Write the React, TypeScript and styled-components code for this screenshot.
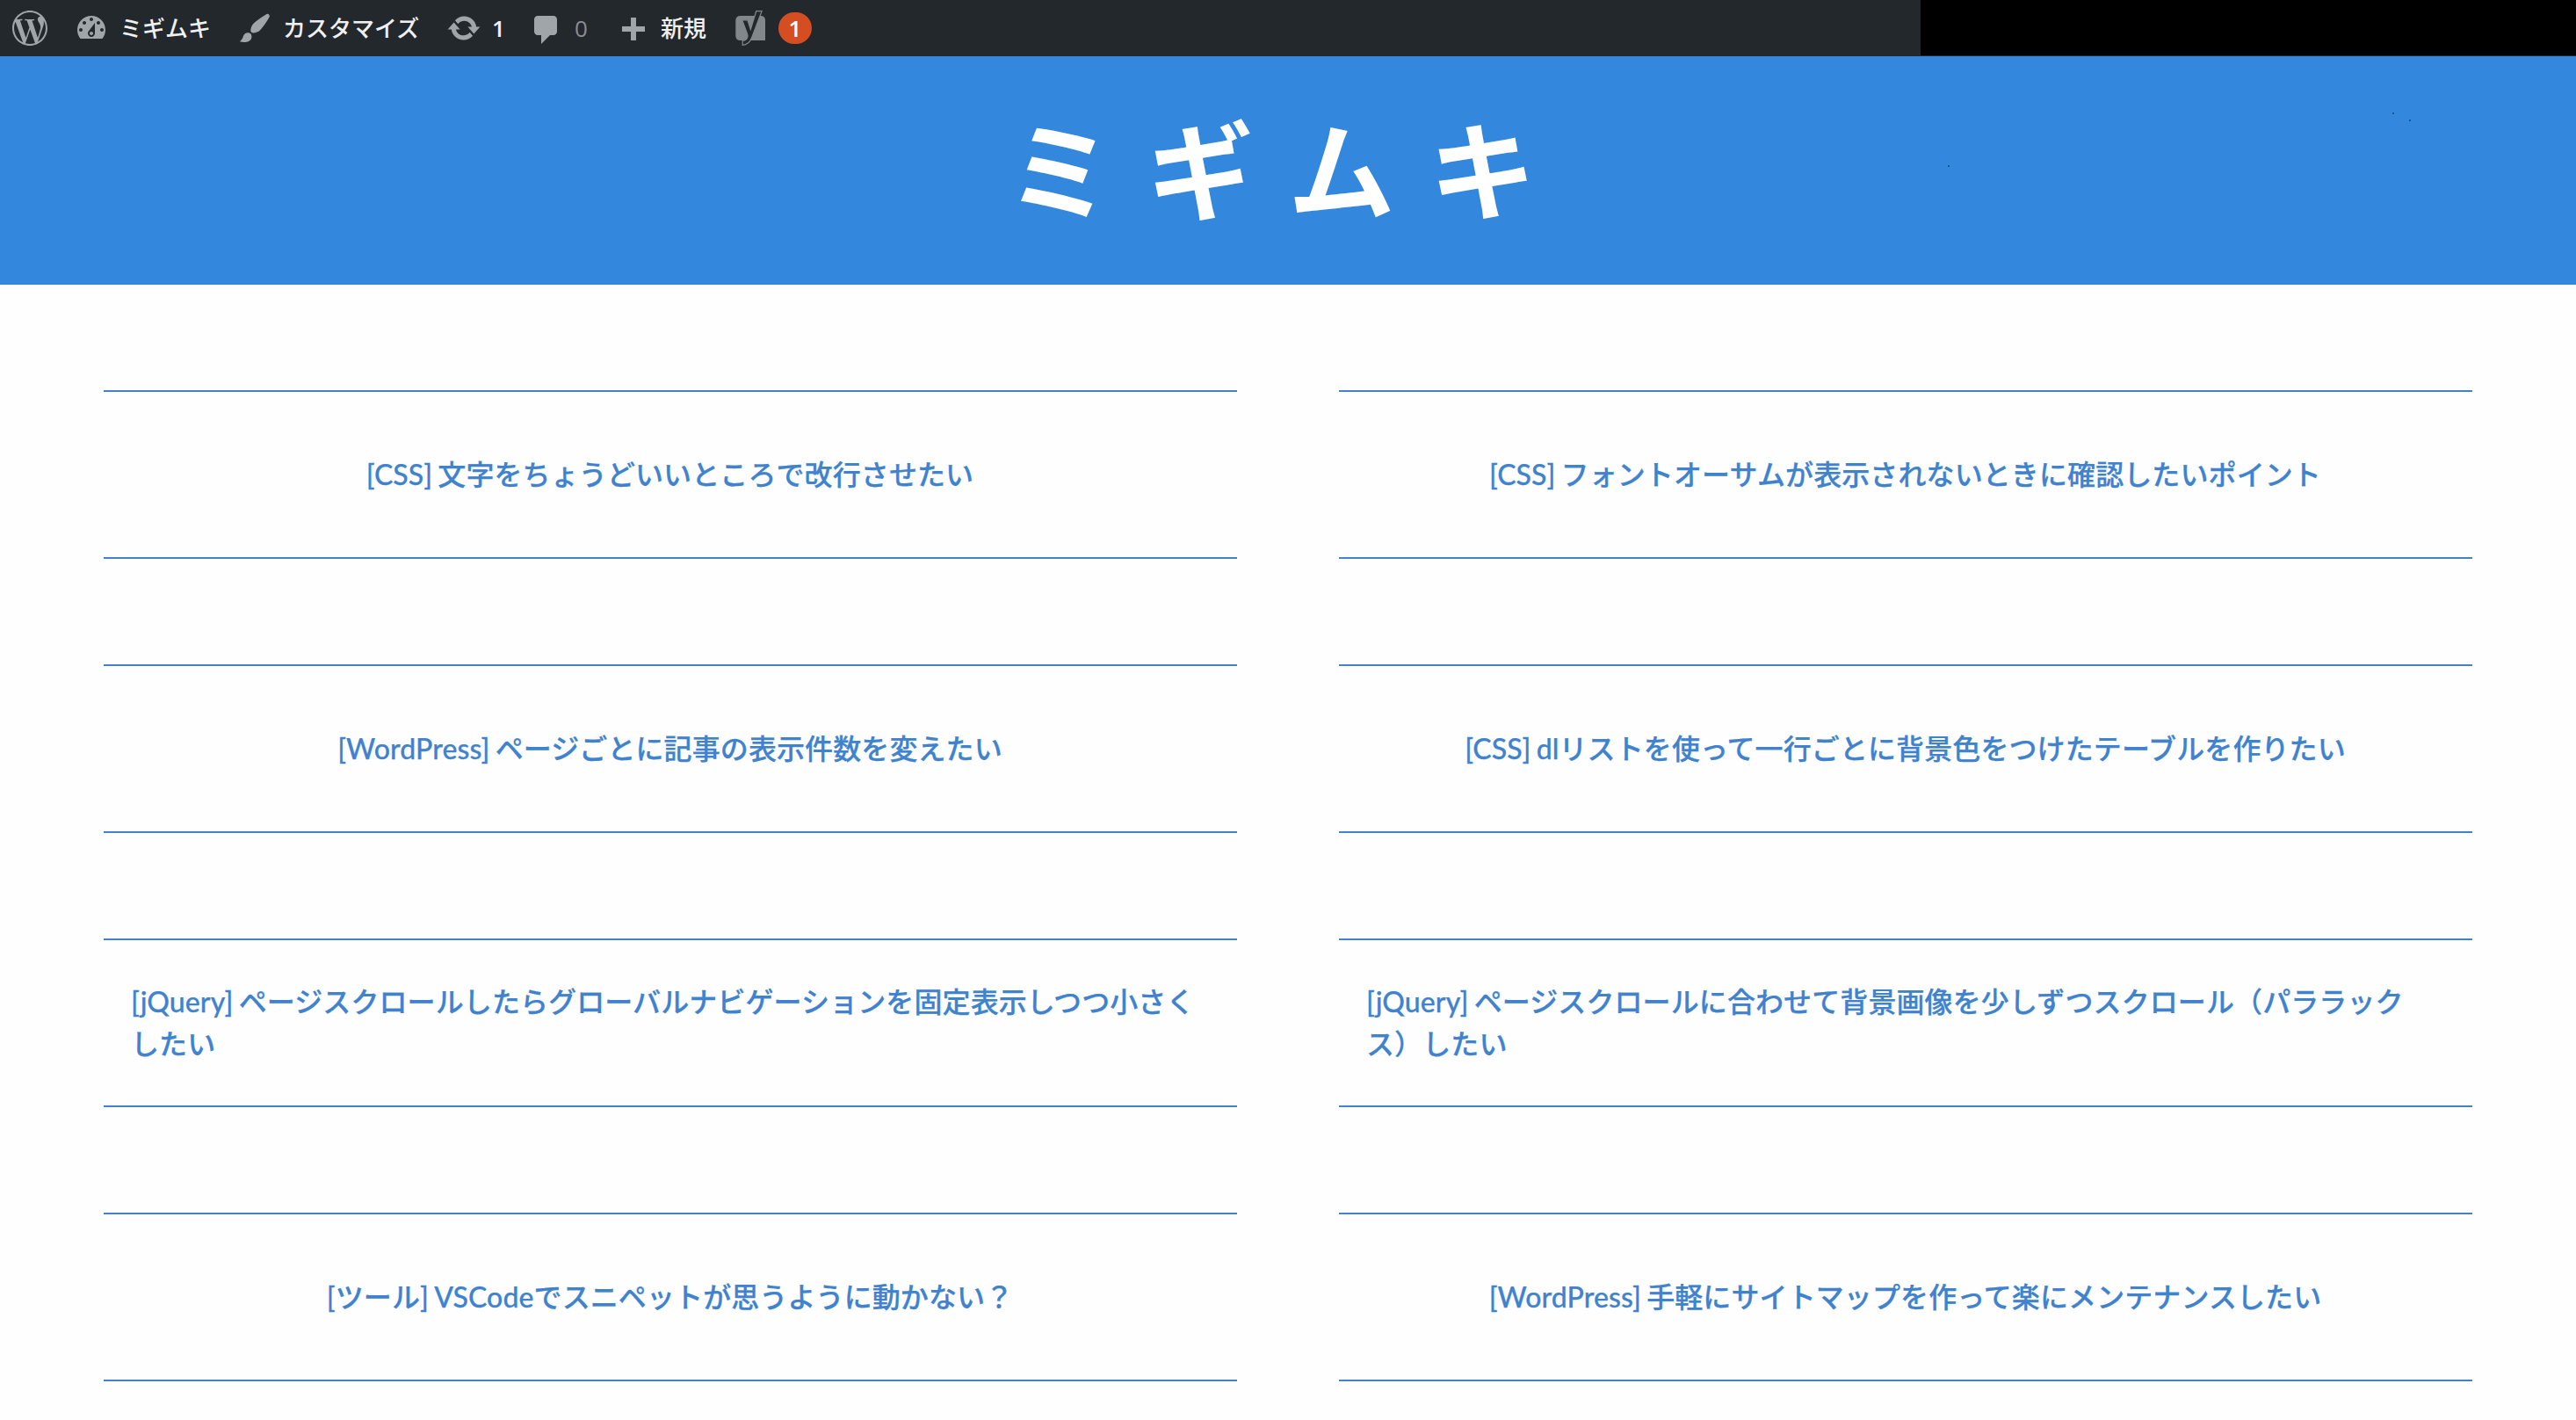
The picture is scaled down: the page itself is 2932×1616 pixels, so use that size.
import React from "react";
import styled, { createGlobalStyle } from "styled-components";
import { SiWordpress } from "react-icons/si";

const GlobalStyle = createGlobalStyle`
  *, *::before, *::after { box-sizing: border-box; }
  body {
    margin: 0;
    background: #fefefe;
    color: #3f83ce;
    font-family: Lato, "Noto Sans CJK JP", sans-serif;
    font-size: 32px;
    overflow: hidden;
  }
`;

const AdminBar = styled.nav`
  display: flex;
  justify-content: space-between;
  height: 64px;
  background: #23282d;
  color: #f0f0f1;
  font: 26px/64px "Open Sans", "Noto Sans CJK JP", sans-serif;
`;

const BarItems = styled.div`
  display: flex;
  align-items: center;
  padding-left: 14px;
`;

const BarItem = styled.a<{ $after?: number; $gap?: number; $muted?: boolean }>`
  display: flex;
  align-items: center;
  gap: ${(p) => p.$gap ?? 12}px;
  margin-right: ${(p) => p.$after ?? 20}px;
  color: ${(p) => (p.$muted ? "#8a8e92" : "inherit")};
  white-space: nowrap;
`;

const Label = styled.span<{ $width: number; $weight?: number }>`
  width: ${(p) => p.$width}px;
  height: 64px;
  line-height: 64px;
  font-weight: ${(p) => p.$weight ?? 500};
`;

const Glyph = styled.svg<{ $drop?: number }>`
  width: 40px;
  height: 40px;
  flex: none;
  fill: #a0a5aa;
  margin-top: ${(p) => p.$drop ?? 0}px;
`;

const Logo = styled(SiWordpress)`
  width: 40px;
  height: 40px;
  color: #a0a5aa;
`;

const Badge = styled.span`
  width: 38px;
  height: 36px;
  border-radius: 18px;
  background: #d54e21;
  color: #fff;
  font-weight: 600;
  line-height: 36px;
  text-align: center;
`;

const Blackout = styled.div`
  width: 746px;
  height: 63px;
  background: #000;
`;

const Header = styled.header`
  position: relative;
  display: flex;
  align-items: center;
  justify-content: center;
  height: 260px;
  padding-bottom: 12px;
  background: #3387dd;
`;

const SiteTitle = styled.h1`
  margin: 0;
  color: #fff;
  font: 700 122px/192px "Noto Sans CJK JP", sans-serif;
  letter-spacing: 38.4px;
`;

const Speck = styled.i<{ $x: number; $y: number }>`
  position: absolute;
  left: ${(p) => p.$x}px;
  top: ${(p) => p.$y}px;
  width: 2px;
  height: 2px;
  background: #1d5593;
`;

const PostGrid = styled.main`
  display: grid;
  grid-template-columns: 1290px 1290px;
  column-gap: 116px;
  row-gap: 120px;
  padding: 120px 118px 0;
`;

const PostCard = styled.article`
  display: flex;
  align-items: center;
  justify-content: center;
  height: 192px;
  padding: 0 32px 0 31px;
  border: solid #4583c4;
  border-width: 2px 0;
`;

const PostLink = styled.a`
  line-height: 48px;
  font-weight: 500;
  letter-spacing: 0.1px;
  word-spacing: -2px;
  text-spacing-trim: space-all;
  -webkit-text-stroke: 0.25px currentColor;
`;

const posts = [
  "[CSS] 文字をちょうどいいところで改行させたい",
  "[CSS] フォントオーサムが表示されないときに確認したいポイント",
  "[WordPress] ページごとに記事の表示件数を変えたい",
  "[CSS] dlリストを使って一行ごとに背景色をつけたテーブルを作りたい",
  "[jQuery] ページスクロールしたらグローバルナビゲーションを固定表示しつつ小さくしたい",
  "[jQuery] ページスクロールに合わせて背景画像を少しずつスクロール（パララックス）したい",
  "[ツール] VSCodeでスニペットが思うように動かない？",
  "[WordPress] 手軽にサイトマップを作って楽にメンテナンスしたい",
];

const icons = {
  dashboard:
    "M3.76 16h12.48c1.1-1.37 1.76-3.11 1.76-5 0-4.42-3.58-8-8-8s-8 3.58-8 8c0 1.89.66 3.63 1.76 5zM10 4c.55 0 1 .45 1 1s-.45 1-1 1-1-.45-1-1 .45-1 1-1zM6 6c.55 0 1 .45 1 1s-.45 1-1 1-1-.45-1-1 .45-1 1-1zm8 0c.55 0 1 .45 1 1s-.45 1-1 1-1-.45-1-1 .45-1 1-1zm-5.37 5.55L12 7v6c0 1.1-.9 2-2 2s-2-.9-2-2c0-.57.24-1.08.63-1.45zM4 10c.55 0 1 .45 1 1s-.45 1-1 1-1-.45-1-1 .45-1 1-1zm12 0c.55 0 1 .45 1 1s-.45 1-1 1-1-.45-1-1 .45-1 1-1zm-5 3c0-.55-.45-1-1-1s-1 .45-1 1 .45 1 1 1 1-.45 1-1z",
  brush:
    "M18.33 3.57s.27-.8-.31-1.36c-.53-.52-1.22-.24-1.22-.24-.61.3-5.76 3.47-7.67 5.57-.86.96-2.06 3.79-1.09 4.82.92.98 3.96-.17 4.79-1 2.06-2.06 5.21-7.17 5.5-7.79zM1.4 17.65c2.37-1.56 1.46-3.41 3.23-4.64.93-.65 2.22-.62 3.08.29.63.67.8 2.57-.16 3.46-1.57 1.45-4 1.55-6.15.89z",
  update:
    "M10.2 3.28c3.53 0 6.43 2.61 6.92 6h2.08l-3.5 4-3.5-4h2.32c-.45-1.97-2.21-3.45-4.32-3.45-1.45 0-2.73.71-3.54 1.78L4.95 5.66C6.23 4.2 8.11 3.28 10.2 3.28zm-.4 13.44c-3.52 0-6.43-2.61-6.92-6H.8l3.5-4c1.17 1.33 2.33 2.67 3.5 4H5.48c.45 1.97 2.21 3.45 4.32 3.45 1.45 0 2.73-.71 3.54-1.78l1.71 1.95c-1.28 1.46-3.15 2.38-5.25 2.38z",
  comment:
    "M5 2h9c1.1 0 2 .9 2 2v7c0 1.1-.9 2-2 2h-2l-5 5v-5H5c-1.1 0-2-.9-2-2V4c0-1.1.9-2 2-2z",
  plus: "M17 7v3h-5v5H9v-5H4V7h5V2h3v5h5z",
};

const Icon = ({ name, drop }: { name: keyof typeof icons; drop?: number }) => (
  <Glyph viewBox="0 0 20 20" $drop={drop}>
    <path fillRule="evenodd" d={icons[name]} />
  </Glyph>
);

const YoastMark = () => (
  <Glyph viewBox="0 0 40 40">
    <path fill="#82878c" d="M7 6h23.5q4.5.5 4.5 5v23H7q-5.700 0-5.700-5.500V11.500Q1.300 6 7 6z" />
    <path
      fill="#23282d"
      stroke="#82878c"
      strokeWidth="1.200"
      d="M24.700.7h6.400L19.800 30.500Q16.500 39 9.200 39.300v-5q4.800-.6 5.700-4.300.3-1.500-.3-3.200L8.700 10.800h6.200l3.400 10.700z"
    />
  </Glyph>
);

export default function App() {
  return (
    <>
      <GlobalStyle />
      <AdminBar>
        <BarItems>
          <BarItem $after={30}>
            <Logo />
          </BarItem>
          <BarItem $after={28}>
            <Icon name="dashboard" />
            <Label $width={106}>ミギムキ</Label>
          </BarItem>
          <BarItem $after={26}>
            <Icon name="brush" />
            <Label $width={160}>カスタマイズ</Label>
          </BarItem>
          <BarItem $after={24}>
            <Icon name="update" />
            <Label $width={18} $weight={600}>1</Label>
          </BarItem>
          <BarItem $after={24} $muted>
            <Icon name="comment" drop={4} />
            <Label $width={22}>0</Label>
          </BarItem>
          <BarItem $after={30}>
            <Icon name="plus" drop={8} />
            <Label $width={54}>新規</Label>
          </BarItem>
          <BarItem $gap={10}>
            <YoastMark />
            <Badge>1</Badge>
          </BarItem>
        </BarItems>
        <Blackout />
      </AdminBar>
      <Header>
        <SiteTitle>ミギムキ</SiteTitle>
        <Speck $x={2723} $y={64} />
        <Speck $x={2742} $y={72} />
        <Speck $x={2217} $y={124} />
      </Header>
      <PostGrid>
        {posts.map((title) => (
          <PostCard key={title}>
            <PostLink>{title}</PostLink>
          </PostCard>
        ))}
      </PostGrid>
    </>
  );
}
